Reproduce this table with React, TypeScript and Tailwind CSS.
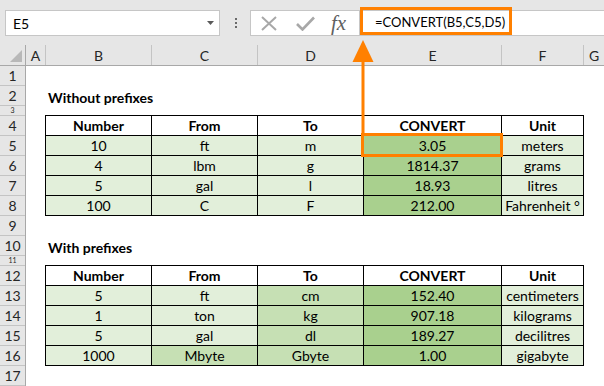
import React from "react";

const L = "bg-[#e2efda]";
const M = "bg-[#c6e0b4]";
const D = "bg-[#a9d08e]";
const W = "bg-white";

const colW = ["w-[106px]", "w-[106px]", "w-[106px]", "w-[138px]", "w-[82px]"];

type C = [string, string];

const head: C[] = [
  ["Number", W],
  ["From", W],
  ["To", W],
  ["CONVERT", W],
  ["Unit", W],
];

const t1: C[][] = [
  [["10", L], ["ft", L], ["m", L], ["3.05", D], ["meters", L]],
  [["4", L], ["lbm", L], ["g", L], ["1814.37", D], ["grams", L]],
  [["5", L], ["gal", L], ["l", L], ["18.93", D], ["litres", L]],
  [["100", L], ["C", L], ["F", L], ["212.00", D], ["Fahrenheit °", L]],
];

const t2: C[][] = [
  [["5", L], ["ft", L], ["cm", M], ["152.40", D], ["centimeters", L]],
  [["1", L], ["ton", L], ["kg", M], ["907.18", D], ["kilograms", L]],
  [["5", L], ["gal", L], ["dl", M], ["189.27", D], ["decilitres", L]],
  [["1000", L], ["Mbyte", M], ["Gbyte", M], ["1.00", D], ["gigabyte", L]],
];

const rowHdr: { n: string; small?: boolean }[] = [
  { n: "1" },
  { n: "2" },
  { n: "3", small: true },
  { n: "4" },
  { n: "5" },
  { n: "6" },
  { n: "7" },
  { n: "8" },
  { n: "9" },
  { n: "10" },
  { n: "11", small: true },
  { n: "12" },
  { n: "13" },
  { n: "14" },
  { n: "15" },
  { n: "16" },
  { n: "17" },
];

function Table({ rows }: { rows: C[][] }) {
  const all = [head, ...rows];
  return (
    <div className="ml-[19px] w-[539px] border-l border-t border-black">
      {all.map((r, i) => (
        <div key={i} className="flex h-[20px]">
          {r.map((c, j) => (
            <div
              key={j}
              className={`${colW[j]} ${c[1]} ${i === 0 ? "font-bold" : ""} flex items-center justify-center border-b border-r border-black pt-[1px] text-[14px] leading-none text-black whitespace-nowrap`}
            >
              {c[0]}
            </div>
          ))}
        </div>
      ))}
    </div>
  );
}

export default function App() {
  return (
    <div
      className="relative h-[386px] w-[604px] overflow-hidden bg-white"
      style={{ fontFamily: "Lato, 'Open Sans', sans-serif" }}
    >
      {/* formula bar */}
      <div className="flex h-[45px] bg-[#e6e6e6] pl-[5px] pt-[10px]">
        <div className="flex h-[26px] w-[215px] items-center justify-between border border-[#c6c6c6] bg-white pl-[7px] pr-[5px] text-[14px] text-black">
          <span>E5</span>
          <svg width="7" height="4" viewBox="0 0 7 4">
            <polygon points="0,0 7,0 3.5,4" fill="#5a5a5a" />
          </svg>
        </div>
        <div className="flex h-[26px] w-[30px] flex-col items-center justify-center gap-[2px] pl-[1px]">
          <span className="h-[2px] w-[2px] bg-[#6a6a6a]" />
          <span className="h-[2px] w-[2px] bg-[#6a6a6a]" />
          <span className="h-[2px] w-[2px] bg-[#6a6a6a]" />
        </div>
        <div className="flex h-[26px] w-[110px] items-center border border-[#c6c6c6] bg-white">
          <svg className="ml-[10px]" width="16" height="15" viewBox="0 0 16 15">
            <path d="M1 1 L15 14 M15 1 L1 14" stroke="#a8a8a8" strokeWidth="2" fill="none" />
          </svg>
          <svg className="ml-[19px]" width="19" height="15" viewBox="0 0 19 15">
            <path d="M1 8 L6.5 13.5 L18 1.5" stroke="#a8a8a8" strokeWidth="2.6" fill="none" />
          </svg>
          <span
            className="ml-[16px] text-[21px] italic leading-none text-[#606060]"
            style={{ fontFamily: "'Liberation Serif', 'DejaVu Serif', serif" }}
          >
            fx
          </span>
        </div>
        <div className="flex h-[26px] flex-1 items-center border-y border-[#c6c6c6] bg-white pl-[15px] text-[13px] text-black">
          =CONVERT(B5,C5,D5)
        </div>
      </div>

      {/* column headers */}
      <div className="flex h-[21px] border-b border-[#a8a8a8] bg-[#e6e6e6] text-[14px] text-[#262626]">
        <div className="relative w-[26px] border-r border-[#a8a8a8]">
          <svg className="absolute left-0 top-0" width="26" height="20" viewBox="0 0 26 20">
            <polygon points="22,5 22,17 10,17" fill="#b8b8b8" />
          </svg>
        </div>
        <div className="flex w-[20px] items-center justify-center border-r border-[#c4c4c4]">A</div>
        <div className="flex w-[106px] items-center justify-center border-r border-[#c4c4c4]">B</div>
        <div className="flex w-[106px] items-center justify-center border-r border-[#c4c4c4]">C</div>
        <div className="flex w-[106px] items-center justify-center border-r border-[#c4c4c4]">D</div>
        <div className="flex w-[138px] items-center justify-center border-r border-[#c4c4c4]">E</div>
        <div className="flex w-[82px] items-center justify-center border-r border-[#c4c4c4]">F</div>
        <div className="flex flex-1 items-center justify-center">G</div>
      </div>

      {/* body */}
      <div className="flex">
        <div className="w-[26px] border-r border-[#a8a8a8] bg-[#e6e6e6] text-[14px] text-[#262626]">
          {rowHdr.map((r) => (
            <div
              key={r.n}
              className={`${r.small ? "h-[10px] text-[7px]" : "h-[20px]"} flex items-center justify-center overflow-hidden border-b border-[#c4c4c4] leading-none`}
            >
              {r.n}
            </div>
          ))}
        </div>
        <div className="flex-1">
          <div className="h-[20px]" />
          <div className="flex h-[20px] items-center pl-[22px] pt-[2px] text-[14px] font-bold text-black">
            Without prefixes
          </div>
          <div className="h-[9px]" />
          <Table rows={t1} />
          <div className="h-[20px]" />
          <div className="flex h-[20px] items-center pl-[22px] pt-[2px] text-[14px] font-bold text-black">
            With prefixes
          </div>
          <div className="h-[9px]" />
          <Table rows={t2} />
        </div>
      </div>

      {/* annotations */}
      <svg
        className="pointer-events-none absolute left-0 top-0"
        width="604"
        height="386"
        viewBox="0 0 604 386"
      >
        <rect x="361.5" y="8.5" width="149" height="25" fill="none" stroke="#ff8000" strokeWidth="3" />
        <rect x="362.5" y="134.5" width="139" height="21" fill="none" stroke="#ff8000" strokeWidth="3" />
        <polygon points="363,40 352.5,62 373.5,62" fill="#ff8000" />
        <rect x="361.5" y="60" width="3" height="74" fill="#ff8000" />
      </svg>
    </div>
  );
}
